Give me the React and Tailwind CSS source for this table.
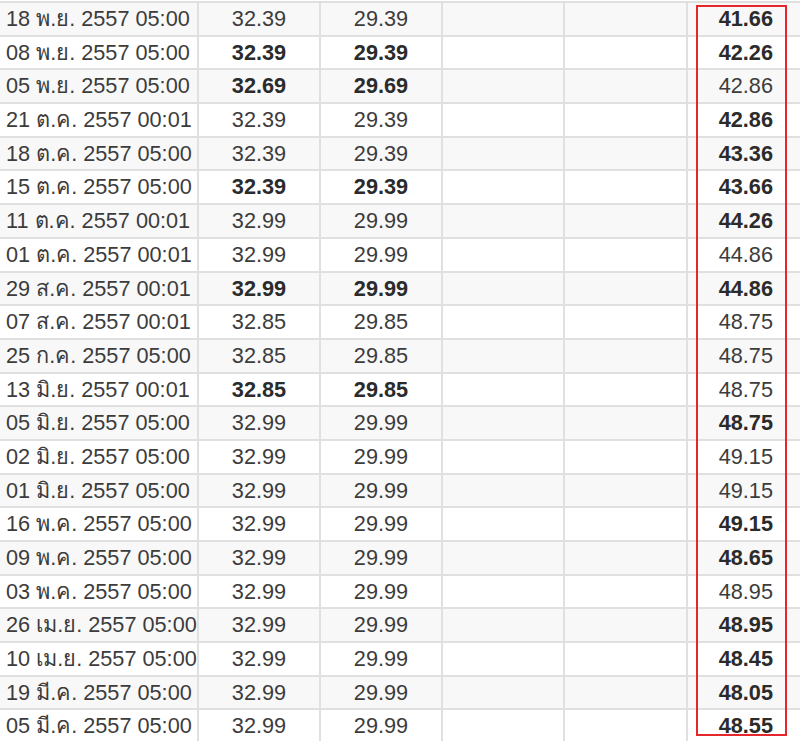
import React from "react";

const rows = [
  ["18 พ.ย. 2557 05:00", "32.39", "29.39", false, "41.66", true],
  ["08 พ.ย. 2557 05:00", "32.39", "29.39", true, "42.26", true],
  ["05 พ.ย. 2557 05:00", "32.69", "29.69", true, "42.86", false],
  ["21 ต.ค. 2557 00:01", "32.39", "29.39", false, "42.86", true],
  ["18 ต.ค. 2557 05:00", "32.39", "29.39", false, "43.36", true],
  ["15 ต.ค. 2557 05:00", "32.39", "29.39", true, "43.66", true],
  ["11 ต.ค. 2557 00:01", "32.99", "29.99", false, "44.26", true],
  ["01 ต.ค. 2557 00:01", "32.99", "29.99", false, "44.86", false],
  ["29 ส.ค. 2557 00:01", "32.99", "29.99", true, "44.86", true],
  ["07 ส.ค. 2557 00:01", "32.85", "29.85", false, "48.75", false],
  ["25 ก.ค. 2557 05:00", "32.85", "29.85", false, "48.75", false],
  ["13 มิ.ย. 2557 00:01", "32.85", "29.85", true, "48.75", false],
  ["05 มิ.ย. 2557 05:00", "32.99", "29.99", false, "48.75", true],
  ["02 มิ.ย. 2557 05:00", "32.99", "29.99", false, "49.15", false],
  ["01 มิ.ย. 2557 05:00", "32.99", "29.99", false, "49.15", false],
  ["16 พ.ค. 2557 05:00", "32.99", "29.99", false, "49.15", true],
  ["09 พ.ค. 2557 05:00", "32.99", "29.99", false, "48.65", true],
  ["03 พ.ค. 2557 05:00", "32.99", "29.99", false, "48.95", false],
  ["26 เม.ย. 2557 05:00", "32.99", "29.99", false, "48.95", true],
  ["10 เม.ย. 2557 05:00", "32.99", "29.99", false, "48.45", true],
  ["19 มี.ค. 2557 05:00", "32.99", "29.99", false, "48.05", true],
  ["05 มี.ค. 2557 05:00", "32.99", "29.99", false, "48.55", true],
];

const cell = "h-full flex items-center border-r-2 border-[#e0e0e0]";

export default function App() {
  return (
    <div
      className="relative w-[800px] h-[741px] overflow-hidden bg-white text-[21.7px] text-[#3c3c3c]"
      style={{ fontFamily: '"Liberation Sans", Arial, "Noto Sans", "DejaVu Sans", sans-serif' }}
    >
      <div className="border-t-2 border-[#e0e0e0] mt-[1px]">
        {rows.map((r, i) => (
          <div
            key={i}
            className={`grid grid-cols-[199px_122px_122px_122px_123px_1fr] h-[33.7px] border-b-2 border-[#e0e0e0] ${
              i % 2 === 0 ? "bg-[#f8f8f8]" : "bg-white"
            }`}
          >
            <div className={`${cell} pl-[6px] whitespace-nowrap`}>{r[0]}</div>
            <div className={`${cell} justify-center ${r[3] ? "font-bold text-[#2b2b2b]" : ""}`}>{r[1]}</div>
            <div className={`${cell} justify-center ${r[3] ? "font-bold text-[#2b2b2b]" : ""}`}>{r[2]}</div>
            <div className={cell} />
            <div className={cell} />
            <div className={`h-full flex items-center justify-end pr-[27px] ${r[5] ? "font-bold text-[#2b2b2b]" : ""}`}>
              {r[4]}
            </div>
          </div>
        ))}
      </div>

      {/* highlight box */}
      <div className="absolute left-[696px] top-[5px] w-[91px] h-[731px] border-2 border-[#e5262b]" />
    </div>
  );
}
